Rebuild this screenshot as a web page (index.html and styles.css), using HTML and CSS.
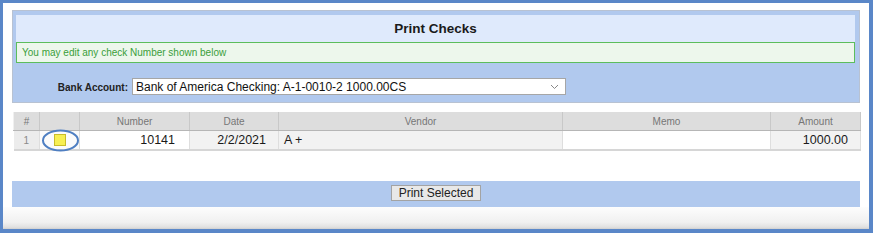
FILE: index.html
```
<!DOCTYPE html>
<html>
<head>
<meta charset="utf-8">
<title>Print Checks</title>
<link rel="stylesheet" href="styles.css">
</head>
<body>
<div class="frame">
  <div class="panel">
    <div class="title">Print Checks</div>
    <div class="notice">You may edit any check Number shown below</div>
    <div class="bank-row">
      <span class="bank-label">Bank Account:</span>
      <div class="select">
        <span class="select-text">Bank of America Checking: A-1-0010-2 1000.00CS</span>
        <svg class="chevron" width="9" height="6" viewBox="0 0 9 6"><path d="M1 1 L4.5 4.5 L8 1" fill="none" stroke="#888" stroke-width="1"/></svg>
      </div>
    </div>
  </div>

  <table class="grid">
    <colgroup>
      <col class="c-num"><col class="c-cb"><col class="c-number"><col class="c-date"><col class="c-vendor"><col class="c-memo"><col class="c-amount">
    </colgroup>
    <thead>
      <tr>
        <th>#</th><th></th><th>Number</th><th>Date</th><th>Vendor</th><th>Memo</th><th>Amount</th>
      </tr>
    </thead>
    <tbody>
      <tr>
        <td class="idx">1</td>
        <td class="cb">
          <span class="box"></span>
          <svg class="circle" width="39" height="23" viewBox="0 0 39 23"><ellipse cx="19.5" cy="11.5" rx="17.5" ry="10" fill="none" stroke="#4f7fc2" stroke-width="2"/></svg>
        </td>
        <td class="right white num">10141</td>
        <td class="right shade">2/2/2021</td>
        <td class="left shade">A +</td>
        <td class="white"></td>
        <td class="right shade">1000.00</td>
      </tr>
    </tbody>
  </table>

  <div class="footer-bar">
    <button class="btn">Print Selected</button>
  </div>
  <div class="bottom-strip"></div>
</div>
</body>
</html>
```

FILE: styles.css
```
html, body {
  margin: 0;
  padding: 0;
  background: #ffffff;
}

.frame {
  width: 873px;
  height: 233px;
  box-sizing: border-box;
  border-style: solid;
  border-color: #5a87c8;
  border-width: 3px 4px 4px 3px;
  background: #ffffff;
  display: flex;
  flex-direction: column;
  font-family: "Liberation Sans", Arial, sans-serif;
}

.panel {
  margin: 7px 9px 0 9px;
  height: 93px;
  box-sizing: border-box;
  border: 1px solid #b8c2d2;
  background: #b1c9ee;
  padding: 4px 4px 0 3px;
  display: flex;
  flex-direction: column;
}

.title {
  height: 27px;
  background: #dfeafc;
  display: flex;
  align-items: center;
  justify-content: center;
  font-weight: bold;
  font-size: 13.5px;
  color: #1a1a1a;
}

.notice {
  height: 21px;
  box-sizing: border-box;
  border: 1.5px solid #5cbd5c;
  background: #edf7ec;
  color: #3a9e3a;
  font-size: 10px;
  padding-left: 5px;
  display: flex;
  align-items: center;
}

.bank-row {
  display: flex;
  align-items: center;
  gap: 4px;
  padding-top: 15px;
}

.bank-label {
  width: 112px;
  text-align: right;
  font-weight: bold;
  font-size: 10px;
  color: #222;
  position: relative;
  top: 1px;
}

.select {
  width: 434px;
  height: 17px;
  box-sizing: border-box;
  border: 1px solid #a6a6a6;
  background: #ffffff;
  display: flex;
  align-items: center;
  justify-content: space-between;
  padding: 0 6px 0 3px;
}

.select-text {
  font-size: 12px;
  color: #111;
}

.chevron {
  display: block;
}

.grid {
  margin: 9px 9px 0 10px;
  width: 847px;
  border-collapse: collapse;
  table-layout: fixed;
}

.c-num { width: 26px; }
.c-cb { width: 40px; }
.c-number { width: 110px; }
.c-date { width: 89px; }
.c-vendor { width: 284px; }
.c-memo { width: 208px; }
.c-amount { width: 90px; }

.grid th {
  height: 18px;
  padding: 0;
  background: #dddddd;
  color: #767676;
  font-weight: normal;
  font-size: 10px;
  text-align: center;
  border-left: 1px solid #f0f0f0;
  border-right: 1px solid #c8c8c8;
  border-bottom: 1px solid #b6b6b6;
}

.grid td {
  height: 18px;
  padding: 0;
  font-size: 12.5px;
  color: #1a1a1a;
  border-right: 1px solid #dedede;
  border-bottom: 2px solid #d6d6d6;
}

.grid td.idx {
  background: #ececec;
  color: #8a8a8a;
  font-size: 10px;
  text-align: center;
}

.grid td.cb {
  background: #fbfbfb;
  position: relative;
}

.box {
  display: block;
  width: 10px;
  height: 10px;
  margin-left: 14px;
  background: #f7ef52;
  border: 1px solid #c9bc2a;
}

.circle {
  position: absolute;
  left: 1px;
  top: -2px;
}

.grid td.white { background: #ffffff; }
.grid td.shade { background: #f2f2f2; }
.grid td.right { text-align: right; padding-right: 12px; }
.grid td.num { padding-right: 14px; }
.grid td.left { text-align: left; padding-left: 5px; }

.footer-bar {
  margin: 30px 9px 0 9px;
  height: 26px;
  background: #b1c9ee;
  display: flex;
  justify-content: center;
  align-items: flex-start;
  padding-top: 4px;
  box-sizing: border-box;
}

.btn {
  height: 16px;
  padding: 0 7px;
  margin: 0;
  border: 1px solid #a3a3a3;
  background: #e8e8e8;
  font-family: "Liberation Sans", Arial, sans-serif;
  font-size: 12px;
  color: #222;
  line-height: 14px;
}

.bottom-strip {
  margin-top: auto;
  height: 22px;
  background: linear-gradient(#fdfdfd, #f0f0f0 70%, #e0e0e0 92%, #cfcfcf);
}
```
